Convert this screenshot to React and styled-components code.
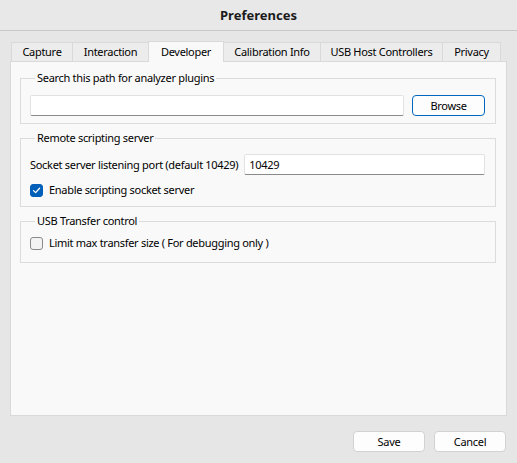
import React, {useState} from 'react'
import styled, {createGlobalStyle} from "styled-components"

const Global=createGlobalStyle `
html, body { margin: 0; padding: 0; }
body {
  background: #e6e6e6;
  font-family: "Noto Sans", "Open Sans", sans-serif;
  font-size: 11px;
  line-height: 16px;
  letter-spacing: -0.3px;
  color: #000;
}
`

const Dialog=styled.div `
width: 517px;
height: 463px;
display: flex;
flex-direction: column;
background: #e6e6e6;
`
const TitleBar=styled.div `
height: 30px;
display: flex;
align-items: center;
justify-content: center;
background: #e8e8e8;
border-bottom: 1px solid #c8c8c8;
font-size: 13px;
font-weight: 700;
letter-spacing: 0;
color: #1b1b1b;
`
const Body=styled.div `
display: flex;
flex-direction: column;
padding: 9px 10px 0 10px;
`
const Tabs=styled.div `
display: flex;
align-items: flex-end;
padding-left: 2px;
height: 21px;
`
const Tab=styled.div `
width: ${({w})=>w}px;
height: ${({active})=>active ? "21px" : "19px"};
display: flex;
align-items: center;
justify-content: center;
background: ${({active})=>active ? "#f9f9f9" : "#ececec"};
border: 1px solid #d9d9d9;
border-bottom: none;
margin-left: -1px;
position: relative;
z-index: ${({active})=>active ? 2 : 1};
margin-bottom: ${({active})=>active ? "-1px" : "0"};
color: #000;
white-space: nowrap;
box-sizing: border-box;
`
const Panel=styled.div `
height: 355px;
box-sizing: border-box;
background: #f9f9f9;
border: 1px solid #d9d9d9;
padding: 8px 10px 0 9px;
display: flex;
flex-direction: column;
gap: 6px;
`
const Group=styled.fieldset `
margin: 0;
border: 1px solid #dcdcdc;
border-radius: 0;
padding: ${({pad})=>pad};
display: flex;
flex-direction: column;
gap: ${({gap})=>gap || 0}px;
min-width: 0;
`
const Legend=styled.legend `
padding: 0 2px;
margin-left: 5px;
line-height: 16px;
color: #000;
`
const Row=styled.div `
display: flex;
align-items: center;
gap: ${({gap})=>gap}px;
`
const Input=styled.input `
box-sizing: border-box;
height: 21px;
flex: 1;
min-width: 0;
border: 1px solid #e2e2e2;
border-bottom: 1px solid #8a8a8a;
border-radius: 2px;
background: #fff;
padding: 0 4px;
font-family: inherit;
font-size: 11px;
letter-spacing: -0.3px;
color: #000;
outline: none;
`
const Button=styled.button `
box-sizing: border-box;
width: ${({w})=>w}px;
height: 21px;
background: #fdfdfd;
border: 1px solid ${({primary})=>primary ? "#0067c0" : "#d2d2d2"};
border-radius: 4px;
font-family: inherit;
font-size: 11px;
letter-spacing: -0.3px;
color: #000;
padding: 0;
`
const Label=styled.span `
white-space: nowrap;
`
const Check=styled.label `
display: flex;
align-items: center;
gap: 6px;
cursor: pointer;
`
const Box=styled.span `
width: 13px;
height: 13px;
box-sizing: border-box;
border-radius: 3px;
display: flex;
align-items: center;
justify-content: center;
background: ${({on})=>on ? "#005fb8" : "#f3f3f3"};
border: 1px solid ${({on})=>on ? "#005fb8" : "#8a8a8a"};
`
const Footer=styled.div `
display: flex;
justify-content: flex-end;
gap: 9px;
padding: 15px 11px 0 0;
`

const CheckBox=({on,children,onToggle})=>(
  <Check onClick={onToggle}>
    <Box on={on}>
      {on && (
        <svg width="9" height="9" viewBox="0 0 9 9">
          <path d="M1.5 4.6 L3.6 6.6 L7.6 2.3" fill="none" stroke="#fff" strokeWidth="1.3" strokeLinecap="round" strokeLinejoin="round"/>
        </svg>
      )}
    </Box>
    <Label>{children}</Label>
  </Check>
)

const tabs=[
  {name:"Capture",w:62},
  {name:"Interaction",w:77},
  {name:"Developer",w:76},
  {name:"Calibration Info",w:98},
  {name:"USB Host Controllers",w:123},
  {name:"Privacy",w:59},
]

const App=()=>{
  const [enable,setEnable]=useState(true)
  const [limit,setLimit]=useState(false)

  return (
    <Dialog>
      <Global/>
      <TitleBar>Preferences</TitleBar>
      <Body>
        <Tabs>
          {tabs.map(t=>(
            <Tab key={t.name} w={t.w} active={t.name==="Developer"}>{t.name}</Tab>
          ))}
        </Tabs>
        <Panel>
          <Group pad="9px 10px 7px 9px">
            <Legend>Search this path for analyzer plugins</Legend>
            <Row gap={8}>
              <Input/>
              <Button primary w={73}>Browse</Button>
            </Row>
          </Group>
          <Group pad="8px 10px 8px 9px" gap={7}>
            <Legend>Remote scripting server</Legend>
            <Row gap={6}>
              <Label>Socket server listening port (default 10429)</Label>
              <Input defaultValue="10429"/>
            </Row>
            <CheckBox on={enable} onToggle={()=>setEnable(!enable)}>Enable scripting socket server</CheckBox>
          </Group>
          <Group pad="6px 10px 11px 9px">
            <Legend>USB Transfer control</Legend>
            <CheckBox on={limit} onToggle={()=>setLimit(!limit)}>Limit max transfer size ( For debugging only )</CheckBox>
          </Group>
        </Panel>
      </Body>
      <Footer>
        <Button w={72}>Save</Button>
        <Button w={72}>Cancel</Button>
      </Footer>
    </Dialog>
  )
}

export default App
